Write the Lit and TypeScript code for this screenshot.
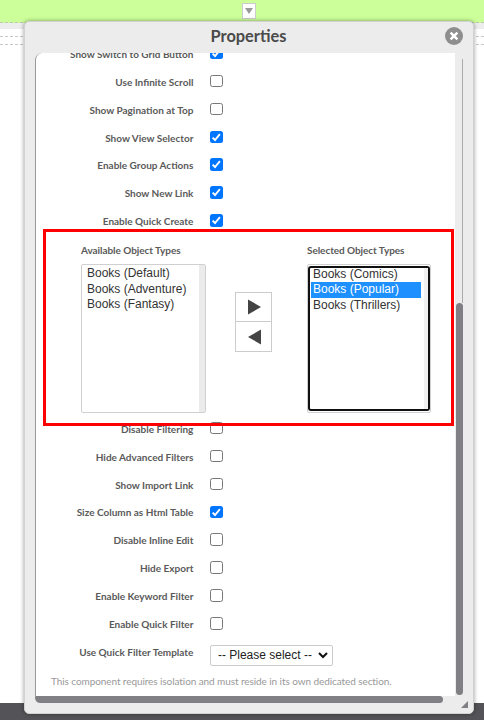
import { LitElement, html, css } from "lit";
import { customElement, property } from "lit/decorators.js";
import { classMap } from "lit/directives/class-map.js";

@customElement("check-row")
class CheckRow extends LitElement {
  @property() label = "";
  @property({ type: Boolean }) checked = false;

  static styles = css`
    :host { display: flex; align-items: center; height: 27.93px; flex: none; }
    .label { width: 157.4px; text-align: right; font: 700 10px/14px Lato, sans-serif; color: #5a5a5a; white-space: nowrap; }
    .box { box-sizing: border-box; width: 12.6px; height: 12.6px; margin: -1.4px 0 0 16.8px; border: 1px solid #777; border-radius: 2.5px; background: #fff; }
    .box.on { border: 0; background: #0075ff; }
    svg { display: block; width: 12.6px; height: 12.6px; }
  `;

  render() {
    return html`<div class="label">${this.label}</div>
      <div class=${classMap({ box: true, on: this.checked })}>
        ${this.checked
          ? html`<svg viewBox="0 0 13 13"><path d="M2.7 6.8 5.2 9.3 10.2 3.3" fill="none" stroke="#fff" stroke-width="2"/></svg>`
          : ""}
      </div>`;
  }
}

@customElement("object-list")
class ObjectList extends LitElement {
  @property() heading = "";
  @property({ type: Array }) items: string[] = [];
  @property() selected = "";
  @property({ type: Boolean }) active = false;

  static styles = css`
    :host { display: block; width: 125px; }
    .heading { font: 700 10px/14px Lato, sans-serif; letter-spacing: -0.06px; color: #5a5a5a; white-space: nowrap; }
    .frame { box-sizing: border-box; height: 149px; margin-top: 7px; border: 1px solid #d0d0d0; border-radius: 2px; background: #fff; }
    .list { box-sizing: border-box; height: 100%; display: flex; }
    .options { flex: 1; padding: 1px 0 0 1px; }
    .option { height: 15.6px; padding-left: 4px; font: 12px/15.6px "Liberation Sans", Arial, sans-serif; color: #333; white-space: nowrap; }
    .track { width: 6.5px; background: #ebebeb; }
    .active .frame { padding: 1px 0 1px; width: 124px; }
    .active .list { border: 2px solid #101010; border-radius: 3px; width: 122px; }
    .active .options { padding: 0 3px 0 1px; margin-top: -1.5px; }
    .active .option { padding-left: 2px; }
    .active .option.on { background: #1e90ff; color: #fff; }
    .active .track { width: 4px; background: #f0f0f0; }
  `;

  render() {
    return html`<div class=${classMap({ active: this.active })}>
      <div class="heading">${this.heading}</div>
      <div class="frame"><div class="list">
        <div class="options">
          ${this.items.map((t) => html`<div class=${classMap({ option: true, on: t === this.selected })}>${t}</div>`)}
        </div>
        <div class="track"></div>
      </div></div>
    </div>`;
  }
}

@customElement("app-root")
class AppRoot extends LitElement {
  static styles = css`
    :host { display: block; position: relative; width: 484px; height: 720px; overflow: hidden; background: #fff; }
    .page { display: flex; flex-direction: column; height: 720px; }
    .band { box-sizing: border-box; height: 23px; background: #cf9; border-bottom: 1px dashed #bcc8b0; padding: 3px 0 0 242px; }
    .drop { box-sizing: border-box; width: 14px; height: 16px; border: 1px solid #ccc; background: #fff; display: flex; align-items: center; justify-content: center; }
    .drop svg { width: 8px; height: 6px; }
    .strip { height: 6px; background: #ededed; }
    .slot { box-sizing: border-box; height: 9px; margin-top: 7px; border: dashed #c8c8c8; border-width: 1px 0; }
    .footer { height: 17px; margin-top: auto; background: #545458; }
    .dialog { position: absolute; left: 24px; top: 21px; width: 450px; height: 693px; box-sizing: border-box; display: flex; flex-direction: column; background: #ececec; border: 1px solid #d2d2d2; border-radius: 5px; box-shadow: 0 0 4px rgba(0,0,0,.4); padding: 0 9px 9px 10px; }
    .title { position: relative; height: 31px; padding-right: 2px; text-align: center; font: 700 16.4px/28px Lato, sans-serif; color: #4a4a4a; }
    .close { position: absolute; right: 1px; top: 5px; width: 18px; height: 18px; }
    .viewport { display: flex; height: 643px; }
    .panel { box-sizing: border-box; width: 420px; height: 643px; overflow: hidden; background: #fff; border-left: 1px solid #999; border-top-left-radius: 7px; display: flex; flex-direction: column; }
    .rows { margin-top: -13.2px; }
    .transfer { box-sizing: border-box; height: 179.5px; padding: 8px 0 0 45px; display: flex; align-items: flex-start; }
    .buttons { width: 37px; margin: 49px 35px 0 29px; }
    .btn { box-sizing: border-box; height: 30px; border: 1px solid #ccc; display: flex; align-items: center; justify-content: center; }
    .btn + .btn { border-top: 0; }
    .btn svg { width: 14px; height: 16px; }
    .template { display: flex; height: 31px; align-items: center; }
    .tlabel { width: 157.4px; text-align: right; font: 700 10px/14px Lato, sans-serif; color: #5a5a5a; white-space: nowrap; margin-top: -3px; }
    .select { box-sizing: border-box; width: 123px; height: 21px; margin: 3px 0 0 16.5px; border: 1px solid #ccc; border-radius: 2px; display: flex; align-items: center; padding: 0 4px 0 7px; justify-content: space-between; font: 12px/19px "Liberation Sans", Arial, sans-serif; color: #222; white-space: nowrap; }
    .select svg { width: 10px; height: 7px; }
    .note { margin: 4.5px 0 0 15px; font: 10px/14px Lato, sans-serif; letter-spacing: -0.08px; color: #999; white-space: nowrap; }
    .vtrack { width: 7px; margin-left: 1px; padding-top: 6px; display: flex; flex-direction: column; }
    .vline { height: 244px; border-right: 1px solid #aaa; }
    .vthumb { height: 392px; background: #808084; border-radius: 4px; }
    .htrack { height: 7px; width: 428px; }
    .hthumb { width: 408px; height: 7px; background: #808084; border-radius: 1px 4px 4px 6px; }
    .grip { position: absolute; right: 5px; bottom: 4px; width: 8px; height: 8px; }
    .outline { position: absolute; left: 43px; top: 229px; width: 411px; height: 197px; box-sizing: border-box; border: 3px solid #f00; }
  `;

  private upper: [string, boolean][] = [
    ["Show Switch to Grid Button", true],
    ["Use Infinite Scroll", false],
    ["Show Pagination at Top", false],
    ["Show View Selector", true],
    ["Enable Group Actions", true],
    ["Show New Link", true],
    ["Enable Quick Create", true],
  ];

  private lower: [string, boolean][] = [
    ["Disable Filtering", false],
    ["Hide Advanced Filters", false],
    ["Show Import Link", false],
    ["Size Column as Html Table", true],
    ["Disable Inline Edit", false],
    ["Hide Export", false],
    ["Enable Keyword Filter", false],
    ["Enable Quick Filter", false],
  ];

  private rows(list: [string, boolean][]) {
    return list.map(([label, on]) => html`<check-row .label=${label} .checked=${on}></check-row>`);
  }

  render() {
    return html`
      <div class="page">
        <div class="band"><div class="drop"><svg viewBox="0 0 8 6"><path d="M0 0h8L4 6z" fill="#999"/></svg></div></div>
        <div class="strip"></div>
        <div class="slot"></div>
        <div class="footer"></div>
      </div>
      <div class="dialog">
        <div class="title">Properties
          <svg class="close" viewBox="0 0 18 18"><circle cx="9" cy="9" r="9" fill="#8e8e8e"/><path d="M5.6 5.6l6.8 6.8M12.4 5.6l-6.8 6.8" stroke="#fff" stroke-width="2.6"/></svg>
        </div>
        <div class="viewport">
          <div class="panel">
            <div class="rows">${this.rows(this.upper)}</div>
            <div class="transfer">
              <object-list .heading=${"Available Object Types"} .items=${["Books (Default)", "Books (Adventure)", "Books (Fantasy)"]}></object-list>
              <div class="buttons">
                <div class="btn"><svg viewBox="0 0 14 16"><path d="M1 .5v15L14 8z" fill="#444"/></svg></div>
                <div class="btn"><svg viewBox="0 0 14 16"><path d="M14 .5v15L1 8z" fill="#444"/></svg></div>
              </div>
              <object-list active .heading=${"Selected Object Types"} .selected=${"Books (Popular)"} .items=${["Books (Comics)", "Books (Popular)", "Books (Thrillers)"]}></object-list>
            </div>
            ${this.rows(this.lower)}
            <div class="template">
              <div class="tlabel">Use Quick Filter Template</div>
              <div class="select">-- Please select --<svg viewBox="0 0 10 7"><path d="M1 1l4 4 4-4" fill="none" stroke="#111" stroke-width="2"/></svg></div>
            </div>
            <div class="note">This component requires isolation and must reside in its own dedicated section.</div>
          </div>
          <div class="vtrack"><div class="vline"></div><div class="vthumb"></div></div>
        </div>
        <div class="htrack"><div class="hthumb"></div></div>
        <svg class="grip" viewBox="0 0 8 8"><path d="M8 0v7H1z" fill="#808084"/></svg>
      </div>
      <div class="outline"></div>
    `;
  }
}
